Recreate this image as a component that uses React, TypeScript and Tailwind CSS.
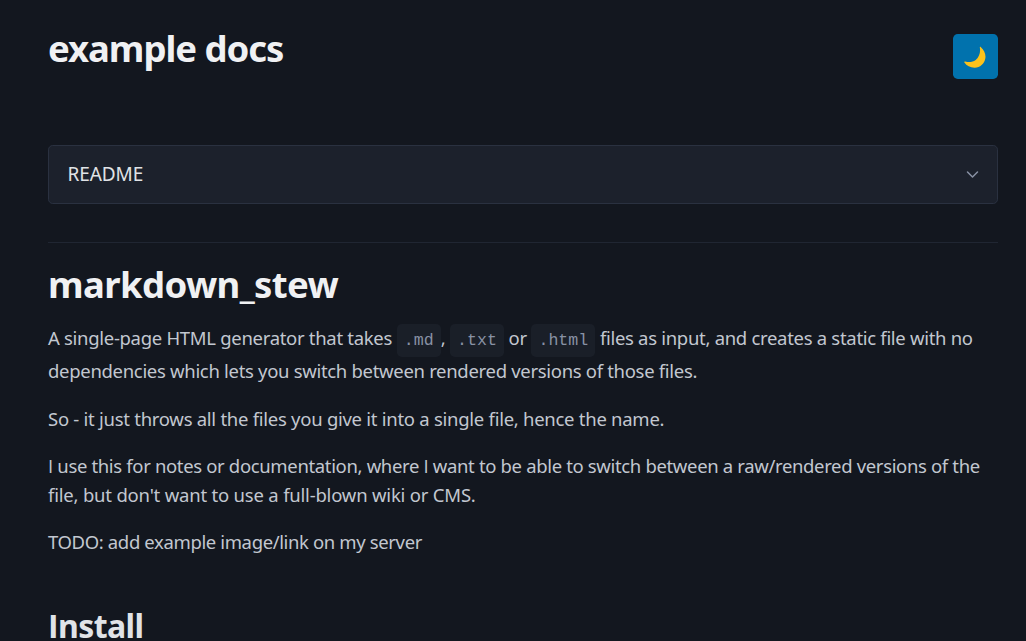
import React from 'react';

function Code({ children }: { children: React.ReactNode }) {
  return (
    <code className="inline-block rounded-[4.75px] bg-[#1a1f28] px-[7.125px] py-[7.125px] align-baseline font-['Liberation_Mono',monospace] text-[16.625px] leading-[19px] tracking-normal text-[#8891a4]">
      {children}
    </code>
  );
}

export default function App() {
  return (
    <div className="h-[641px] overflow-hidden bg-[#13171f] pr-7 pl-12 font-['Noto_Sans',sans-serif] text-[18.5px] leading-[28.5px] text-[#c2c7d0]">
      <header className="flex h-[145px] items-start justify-between pt-[27px]">
        <h1 className="text-[36.5px] leading-[42px] font-bold tracking-[-1.05px] whitespace-nowrap text-[#f0f1f3]">example docs</h1>
        <button aria-label="Toggle theme" className="mt-[7px] flex h-[45px] w-[45px] items-center justify-center rounded-[4.75px] bg-[#0172ad]">
          <svg width="23" height="23" viewBox="0 0 23 23">
            <path d="M15.8 2.600c-.2-.8.6-1 1.100-.4 3.200 2.700 5.200 7 4.400 11.200-1 5.300-5.300 9.200-10.500 9.300-4.300.1-8.200-1.900-10.400-5.200-.5-.8.1-1.300.9-1 3.300 1 7.300.8 10.400-1.500 3.700-2.800 5-8 4.100-12.400z" fill="#fcc21b" />
          </svg>
        </button>
      </header>
      <div className="flex h-[59px] items-center justify-between rounded-[4.75px] border border-[#2a3140] bg-[#1c212c] pr-[17px] pl-[18.5px] text-[#e0e3e7]">
        <span className="text-[19px] tracking-[-0.08px] whitespace-nowrap">README</span>
        <svg width="15" height="15" viewBox="0 0 15 15" fill="none" stroke="#8891a4" strokeWidth="1.5" strokeLinecap="round" strokeLinejoin="round">
          <path d="M2.500 5l5 5 5-5" />
        </svg>
      </div>
      <hr className="mt-[38px] border-[#202632]" />
      <main className="whitespace-nowrap">
        <h1 className="mt-[20px] text-[36.5px] leading-[42px] font-bold tracking-[-0.6px] text-[#f0f1f3]">markdown_stew</h1>
        <p className="mt-[19px]">
          <span className="block h-[33px] leading-[28px] tracking-[-0.3px]">
            A single-page HTML generator that takes <Code>.md</Code>, <Code>.txt</Code> or <Code>.html</Code> files as input, and creates a static file with no
          </span>
          <span className="block tracking-[-0.31px]">dependencies which lets you switch between rendered versions of those files.</span>
        </p>
        <p className="mt-[19px] tracking-[-0.27px]">So - it just throws all the files you give it into a single file, hence the name.</p>
        <p className="mt-[19px]">
          <span className="block tracking-[-0.345px]"><span className="font-['Open_Sans',sans-serif]">I</span> use this for notes or documentation, where <span className="font-['Open_Sans',sans-serif]">I</span> want to be able to switch between a raw/rendered versions of the</span>
          <span className="block tracking-[-0.2px]">file, but don't want to use a full-blown wiki or CMS.</span>
        </p>
        <p className="mt-[19px] tracking-[-0.37px]">TODO: add example image/link on my server</p>
        <h2 className="mt-[49px] text-[32px] leading-[39px] font-bold tracking-[-0.6px] text-[#e0e3e7]"><span className="font-['Open_Sans',sans-serif]">I</span>nstall</h2>
      </main>
    </div>
  );
}
